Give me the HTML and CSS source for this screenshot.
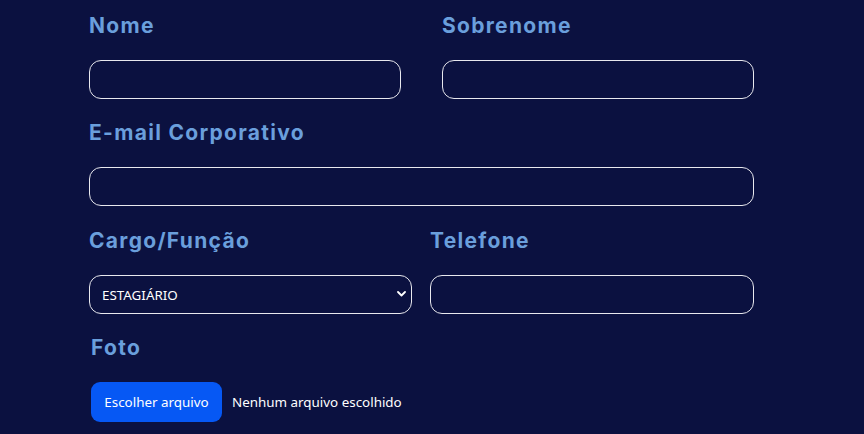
FILE: index.html
```html
<!DOCTYPE html>
<html lang="pt-BR">
<head>
<meta charset="utf-8">
<title>Cadastro</title>
<link rel="stylesheet" href="styles.css">
</head>
<body>
<form class="form">
  <div class="row row-two">
    <div class="group">
      <label class="label" for="nome">Nome</label>
      <input class="field" id="nome" type="text">
    </div>
    <div class="group">
      <label class="label" for="sobrenome">Sobrenome</label>
      <input class="field" id="sobrenome" type="text">
    </div>
  </div>
  <div class="group email">
    <label class="label" for="email">E-mail Corporativo</label>
    <input class="field" id="email" type="email">
  </div>
  <div class="row row-three">
    <div class="group">
      <label class="label" for="cargo">Cargo/Função</label>
      <div class="select-wrap">
        <select class="field select" id="cargo">
          <option>ESTAGIÁRIO</option>
        </select>
        <svg class="chevron" width="9" height="6" viewBox="0 0 9 6"><path d="M1 1l3.5 3.5L8 1" fill="none" stroke="#fff" stroke-width="1.8" stroke-linecap="round" stroke-linejoin="round"/></svg>
      </div>
    </div>
    <div class="group">
      <label class="label" for="tel">Telefone</label>
      <input class="field" id="tel" type="tel">
    </div>
  </div>
  <div class="group foto">
    <span class="label">Foto</span>
    <div class="file">
      <label class="file-btn" for="foto">Escolher arquivo</label>
      <input class="file-input" id="foto" type="file">
      <span class="file-name">Nenhum arquivo escolhido</span>
    </div>
  </div>
</form>
</body>
</html>
```
FILE: styles.css
```css
html, body {
  margin: 0;
  padding: 0;
  background: #0b1140;
  height: 100%;
  overflow: hidden;
}
.form {
  width: 665px;
  margin-left: 89px;
  padding-top: 11px;
  display: flex;
  flex-direction: column;
  gap: 19px;
}
.row {
  display: grid;
}
.row-two {
  grid-template-columns: 312px 312px;
  column-gap: 41px;
}
.row-three {
  grid-template-columns: 323px 324px;
  column-gap: 18px;
}
.group {
  display: flex;
  flex-direction: column;
  gap: 19px;
}
.email {
  margin-bottom: 1px;
}
.label {
  display: block;
  height: 30px;
  line-height: 30px;
  font-family: "Inter", "Lato", sans-serif;
  font-weight: 700;
  font-size: 21px;
  color: #6a9fdc;
  letter-spacing: 1.3px;
}
.field {
  box-sizing: border-box;
  height: 39px;
  width: 100%;
  margin: 0;
  background: #0b1140;
  border: 1px solid #e8e8ee;
  border-radius: 12px;
  color: #fff;
  font-family: "Noto Sans", "Open Sans", sans-serif;
  font-size: 13.4px;
  padding: 0 12px;
  outline: none;
}
.select-wrap {
  position: relative;
}
.select {
  appearance: none;
  -webkit-appearance: none;
}
.chevron {
  position: absolute;
  right: 6px;
  top: 16px;
}
.foto {
  padding-left: 2px;
}
.file {
  display: flex;
  align-items: center;
  gap: 10px;
}
.file-btn {
  box-sizing: border-box;
  width: 131px;
  height: 40px;
  display: flex;
  align-items: center;
  justify-content: center;
  background: #0658f4;
  color: #fff;
  border-radius: 9px;
  font-family: "Noto Sans", "Open Sans", sans-serif;
  font-size: 13.4px;
}
.file-input {
  display: none;
}
.file-name {
  color: #fff;
  font-family: "Noto Sans", "Open Sans", sans-serif;
  font-size: 13.4px;
}
```
